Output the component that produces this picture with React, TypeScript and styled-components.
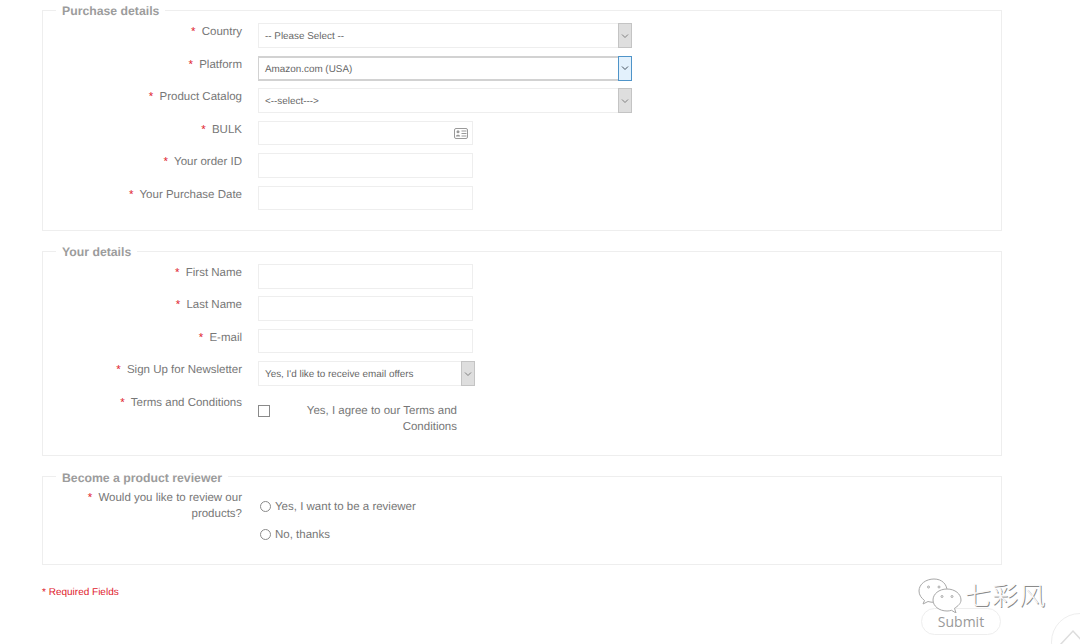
import React from "react";
import styled, { createGlobalStyle } from "styled-components";

const Global = createGlobalStyle`
  html, body { margin: 0; padding: 0; background: #fff; }
  body {
    height: 644px;
    overflow: hidden;
    font-family: "Liberation Sans", Arial, sans-serif;
    text-rendering: geometricPrecision;
  }
`;

const Page = styled.div`
  position: relative;
  width: 1080px;
  height: 644px;
  overflow: hidden;
  padding: 1px 78px 0 42px;
  box-sizing: border-box;
`;

const Section = styled.fieldset<{ $top?: number; $bottom: number; $gap: number }>`
  margin: 0 0 ${(p) => p.$gap}px;
  padding: ${(p) => p.$top ?? 4}px 0 ${(p) => p.$bottom}px;
  border: 1px solid #eeeeee;
  min-width: 0;
`;

const Legend = styled.legend`
  margin-left: 13px;
  padding: 2px 6px 0;
  font-size: 12.25px;
  line-height: 16px;
  font-weight: 700;
  color: #9c9c9c;
`;

const Row = styled.div<{ $h?: number }>`
  display: grid;
  grid-template-columns: 199px 1fr;
  column-gap: 16px;
  height: ${(p) => p.$h ?? 32.5}px;
`;

const Label = styled.label`
  padding-top: 1px;
  text-align: right;
  font-size: 11.5px;
  line-height: 16px;
  color: #777777;
`;

const Star = styled.span`
  color: #e0222e;
  margin-right: 3px;
`;

const Select = styled.div<{ $w: number; $focus?: boolean }>`
  display: flex;
  width: ${(p) => p.$w}px;
  height: 25px;
  box-sizing: border-box;
  border: 1px solid #eeeeee;
  ${(p) => p.$focus && "border-color: #d2d2d2; border-width: 2px 0 2px 1px;"}
  border-right: 0;
  font-size: 9.9px;
  color: #666666;
`;

const SelectText = styled.span<{ $focus?: boolean }>`
  flex: 1;
  padding-left: 6px;
  line-height: ${(p) => (p.$focus ? 23 : 25)}px;
`;

const Arrow = styled.span<{ $focus?: boolean }>`
  display: flex;
  align-items: center;
  justify-content: center;
  width: 14px;
  margin: ${(p) => (p.$focus ? "-2px 0" : "-1px 0")};
  box-sizing: border-box;
  border: 1px solid ${(p) => (p.$focus ? "#4f94c9" : "#c4c4c4")};
  background: ${(p) => (p.$focus ? "#e3f1fc" : "#dedede")};
  color: ${(p) => (p.$focus ? "#44505c" : "#808080")};
`;

const InputBox = styled.div`
  display: flex;
  align-items: center;
  justify-content: flex-end;
  width: 215px;
  height: 24.5px;
  box-sizing: border-box;
  border: 1px solid #eeeeee;
  padding: 1px 4px 0 0;
  color: #999999;
`;

const TermsWrap = styled.div`
  display: flex;
  justify-content: space-between;
  width: 199px;
  padding-top: 8px;
`;

const Checkbox = styled.span`
  width: 12px;
  height: 12px;
  margin-top: 3px;
  box-sizing: border-box;
  border: 1px solid #8a8a8a;
`;

const TermsText = styled.span`
  width: 155px;
  padding-top: 1px;
  text-align: right;
  font-size: 11.5px;
  line-height: 16px;
  color: #777777;
`;

const RadioColumn = styled.div`
  display: flex;
  flex-direction: column;
  gap: 12px;
  padding: 10px 0 0 2px;
`;

const RadioRow = styled.div`
  display: flex;
  align-items: center;
  gap: 4px;
  height: 16px;
  font-size: 11.5px;
  color: #777777;
`;

const RadioDot = styled.span`
  width: 11px;
  height: 11px;
  box-sizing: border-box;
  border: 1px solid #8a8a8a;
  border-radius: 50%;
`;

const Required = styled.div`
  margin-top: 22px;
  font-size: 10px;
  line-height: 12px;
  color: #e0222e;
`;

const Submit = styled.button`
  position: absolute;
  left: 921px;
  top: 608px;
  width: 80px;
  height: 27px;
  border: 1px solid #eeeeee;
  border-radius: 14px;
  background: transparent;
  padding: 0;
  font-family: "Open Sans", sans-serif;
  font-size: 14px;
  color: #999999;
`;

const TopButton = styled.div`
  position: absolute;
  left: 1051px;
  top: 613px;
  width: 58px;
  height: 58px;
  box-sizing: border-box;
  border: 1px solid #eeeeee;
  border-radius: 50%;
  color: #dddddd;
`;

const Watermark = styled.div`
  position: absolute;
  left: 917px;
  top: 577px;
  display: flex;
  align-items: center;
  gap: 2px;
`;

const WatermarkText = styled.span`
  font-family: "Noto Sans CJK SC", sans-serif;
  font-weight: 300;
  font-size: 26px;
  line-height: 36px;
  letter-spacing: 1px;
  color: #fafafa;
  text-shadow: 1px 1px 0 #8a8a8a;
`;

const Chevron = () => (
  <svg width="8" height="6" viewBox="0 0 8 6" fill="none" stroke="currentColor" strokeWidth="1">
    <path d="M1 1.500 4 4.500 7 1.500" />
  </svg>
);

const CardIcon = () => (
  <svg width="14" height="11" viewBox="0 0 14 11" fill="none">
    <rect x="0.5" y="0.5" width="13" height="10" rx="1.5" stroke="#9a9a9a" />
    <circle cx="4" cy="3.8" r="1.5" fill="#9a9a9a" />
    <path d="M1.800 8.500c0-2.400 4.400-2.400 4.400 0z" fill="#9a9a9a" />
    <path d="M7.500 3h5M7.500 5.500h5M7.500 8h5" stroke="#9a9a9a" />
  </svg>
);

const WeChatLogo = () => (
  <svg width="46" height="36" viewBox="0 0 46 36" fill="#fff" stroke="#a8a8a8" strokeWidth="1">
    <path d="M17 2C9 2 2 7 2 14c0 4 2.400 7 5.500 9.500L6 27l5-2.500c2 .6 4 .8 6 .8 7 0 13-5 13-11.500S25 2 17 2z" />
    <circle cx="11.500" cy="10" r="1" fill="none" />
    <circle cx="22" cy="10" r="1" fill="none" />
    <path d="M30 12c-8 0-14 5-14 11s6 11 14 11c1.500 0 3-.2 4.500-.7L39 36l-1.500-4.700C41 29 44 26.500 44 23c0-6-6-11-14-11z" />
    <circle cx="25" cy="19.500" r="1" fill="none" />
    <circle cx="35" cy="19.500" r="1" fill="none" />
  </svg>
);

type Field = { label: string; kind: "select" | "input" | "bulk"; value?: string; focus?: boolean };

const purchase: Field[] = [
  { label: "Country", kind: "select", value: "-- Please Select --" },
  { label: "Platform", kind: "select", value: "Amazon.com (USA)", focus: true },
  { label: "Product Catalog", kind: "select", value: "<--select--->" },
  { label: "BULK", kind: "bulk" },
  { label: "Your order ID", kind: "input" },
  { label: "Your Purchase Date", kind: "input" },
];

const Req = ({ children }: { children: React.ReactNode }) => (
  <Label>
    <Star>*</Star> {children}
  </Label>
);

const Dropdown = ({ w, value, focus }: { w: number; value?: string; focus?: boolean }) => (
  <Select $w={w} $focus={focus}>
    <SelectText $focus={focus}>{value}</SelectText>
    <Arrow $focus={focus}>
      <Chevron />
    </Arrow>
  </Select>
);

export default function App() {
  return (
    <Page>
      <Global />
      <Section $bottom={12} $gap={11}>
        <Legend>Purchase details</Legend>
        {purchase.map((f) => (
          <Row key={f.label}>
            <Req>{f.label}</Req>
            {f.kind === "select" ? (
              <Dropdown w={374} value={f.value} focus={f.focus} />
            ) : (
              <InputBox>{f.kind === "bulk" && <CardIcon />}</InputBox>
            )}
          </Row>
        ))}
      </Section>
      <Section $bottom={14} $gap={12}>
        <Legend>Your details</Legend>
        {["First Name", "Last Name", "E-mail"].map((l) => (
          <Row key={l} $h={32.4}>
            <Req>{l}</Req>
            <InputBox />
          </Row>
        ))}
        <Row $h={32.4}>
          <Req>Sign Up for Newsletter</Req>
          <Dropdown w={217} value="Yes, I'd like to receive email offers" />
        </Row>
        <Row $h={47.4}>
          <Req>Terms and Conditions</Req>
          <TermsWrap>
            <Checkbox />
            <TermsText>Yes, I agree to our Terms and Conditions</TermsText>
          </TermsWrap>
        </Row>
      </Section>
      <Section $top={3} $bottom={7} $gap={0}>
        <Legend>Become a product reviewer</Legend>
        <Row $h={68}>
          <Req>Would you like to review our products?</Req>
          <RadioColumn>
            <RadioRow>
              <RadioDot />
              Yes, I want to be a reviewer
            </RadioRow>
            <RadioRow>
              <RadioDot />
              No, thanks
            </RadioRow>
          </RadioColumn>
        </Row>
      </Section>
      <Required>* Required Fields</Required>
      <Submit>Submit</Submit>
      <TopButton>
        <svg width="40" height="32" viewBox="0 0 40 32" fill="none" stroke="currentColor" strokeWidth="1.5">
          <path d="M8 31 21 17 34 31" />
        </svg>
      </TopButton>
      <Watermark>
        <WeChatLogo />
        <WatermarkText>七彩风</WatermarkText>
      </Watermark>
    </Page>
  );
}
